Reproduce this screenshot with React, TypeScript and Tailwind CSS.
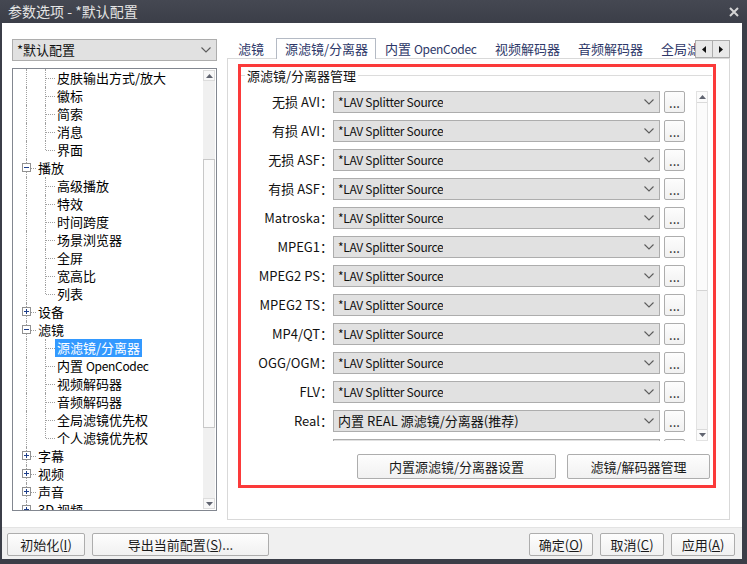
import React from "react";

const FONT = "font-['Noto_Sans_CJK_SC','Noto_Sans',sans-serif]";

// latin runs render a bit narrower in the original UI font
function Lat({ children }: { children: React.ReactNode }) {
  return <span className="text-[12px] tracking-[-0.3px]">{children}</span>;
}

type TreeNode = {
  label: React.ReactNode;
  level: 0 | 1;
  expander?: "plus" | "minus";
  last?: boolean;
  selected?: boolean;
};

const tree: TreeNode[] = [
  { label: "皮肤输出方式/放大", level: 1 },
  { label: "徽标", level: 1 },
  { label: "简索", level: 1 },
  { label: "消息", level: 1 },
  { label: "界面", level: 1, last: true },
  { label: "播放", level: 0, expander: "minus" },
  { label: "高级播放", level: 1 },
  { label: "特效", level: 1 },
  { label: "时间跨度", level: 1 },
  { label: "场景浏览器", level: 1 },
  { label: "全屏", level: 1 },
  { label: "宽高比", level: 1 },
  { label: "列表", level: 1, last: true },
  { label: "设备", level: 0, expander: "plus" },
  { label: "滤镜", level: 0, expander: "minus" },
  { label: "源滤镜/分离器", level: 1, selected: true },
  { label: <>内置 <Lat>OpenCodec</Lat></>, level: 1 },
  { label: "视频解码器", level: 1 },
  { label: "音频解码器", level: 1 },
  { label: "全局滤镜优先权", level: 1 },
  { label: "个人滤镜优先权", level: 1, last: true },
  { label: "字幕", level: 0, expander: "plus" },
  { label: "视频", level: 0, expander: "plus" },
  { label: "声音", level: 0, expander: "plus" },
  { label: "3D 视频", level: 0, expander: "plus" },
];

const LAV = <Lat>*LAV Splitter Source</Lat>;

const splitters: [string, React.ReactNode][] = [
  ["无损 AVI：", LAV],
  ["有损 AVI：", LAV],
  ["无损 ASF：", LAV],
  ["有损 ASF：", LAV],
  ["Matroska：", LAV],
  ["MPEG1：", LAV],
  ["MPEG2 PS：", LAV],
  ["MPEG2 TS：", LAV],
  ["MP4/QT：", LAV],
  ["OGG/OGM：", LAV],
  ["FLV：", LAV],
  ["Real：", "内置 REAL 源滤镜/分离器(推荐)"],
  ["RM：", LAV],
];

function Chevron() {
  return (
    <svg width="10" height="6" viewBox="0 0 10 6">
      <path d="M0.5 0.5 L5 5 L9.5 0.5" fill="none" stroke="#5c5c5c" strokeWidth="1.1" />
    </svg>
  );
}

function Tri({ dir }: { dir: "up" | "down" | "left" | "right" }) {
  const d = {
    up: "M0 4 L3.5 0 L7 4 Z",
    down: "M0 0 L7 0 L3.5 4 Z",
    left: "M4 0 L4 7 L0 3.5 Z",
    right: "M0 0 L4 3.5 L0 7 Z",
  }[dir];
  const vertical = dir === "up" || dir === "down";
  return (
    <svg width={vertical ? 7 : 4} height={vertical ? 4 : 7} viewBox={vertical ? "0 0 7 4" : "0 0 4 7"}>
      <path d={d} fill={vertical ? "#606470" : "#111"} />
    </svg>
  );
}

function Expander({ kind }: { kind: "plus" | "minus" }) {
  return (
    <div className="absolute left-[9px] top-[4px] w-[9px] h-[9px] border border-[#919191] bg-white flex items-center justify-center">
      <svg width="7" height="7" viewBox="0 0 7 7">
        <path d="M1 3.5 H6" stroke="#1f3f8a" strokeWidth="1" />
        {kind === "plus" && <path d="M3.5 1 V6" stroke="#1f3f8a" strokeWidth="1" />}
      </svg>
    </div>
  );
}

function TreeRow({ node }: { node: TreeNode }) {
  return (
    <div className="relative h-[18px] flex items-center text-[13px] text-black whitespace-nowrap">
      <div className="absolute left-[13px] top-0 bottom-0 border-l border-dotted border-[#a0a0a0]" />
      {node.level === 1 ? (
        <>
          <div
            className={`absolute left-[32px] top-0 border-l border-dotted border-[#a0a0a0] ${
              node.last ? "h-[9px]" : "bottom-0"
            }`}
          />
          <div className="absolute left-[33px] top-[9px] w-[9px] border-t border-dotted border-[#a0a0a0]" />
          <span
            className={`ml-[42px] px-[2px] h-[18px] leading-[18px] ${
              node.selected ? "bg-[#3399ff] text-white" : ""
            }`}
          >
            {node.label}
          </span>
        </>
      ) : (
        <>
          <div className="absolute left-[18px] top-[9px] w-[5px] border-t border-dotted border-[#a0a0a0]" />
          {node.expander && <Expander kind={node.expander} />}
          <span className="ml-[25px] leading-[18px]">{node.label}</span>
        </>
      )}
    </div>
  );
}

function Dropdown({ value, className }: { value: React.ReactNode; className: string }) {
  return (
    <div
      className={`flex items-center justify-between bg-[#e1e1e1] border border-[#adadad] text-[13px] text-[#111] pl-[4px] pr-[5px] ${className}`}
    >
      <span className="whitespace-nowrap overflow-hidden">{value}</span>
      <Chevron />
    </div>
  );
}

function Button({ children, className }: { children: React.ReactNode; className: string }) {
  return (
    <div
      className={`flex items-center justify-center rounded-[2px] border border-[#adadad] bg-gradient-to-b from-[#fdfdfd] to-[#f1f1f1] text-[13px] text-[#1a1a1a] whitespace-nowrap ${className}`}
    >
      {children}
    </div>
  );
}

function LeftPane() {
  return (
    <div className="w-[205px] pt-[16px] flex flex-col">
      <Dropdown value="*默认配置" className="h-[22px] pl-[4px] pr-[4px]" />
      <div className="mt-[7px] h-[443px] border border-[#828790] flex bg-white overflow-hidden">
        <div className="flex-1 overflow-hidden">
          {tree.map((n, i) => (
            <TreeRow key={i} node={n} />
          ))}
        </div>
        <div className="w-[12px] mr-[1px] my-[1px] bg-[#f0f0f0] flex flex-col">
          <div className="h-[11px] border border-[#dcdcdc] bg-[#f8f8f8] flex items-center justify-center">
            <Tri dir="up" />
          </div>
          <div className="flex-1">
            <div className="mt-[78px] h-[269px] border border-[#c8c8c8] bg-[#fafafa]" />
          </div>
          <div className="h-[11px] border border-[#dcdcdc] bg-[#f8f8f8] flex items-center justify-center">
            <Tri dir="down" />
          </div>
        </div>
      </div>
    </div>
  );
}

function Tabs() {
  return (
    <div className="flex h-[21px] relative z-10 -mb-[1px]">
      <div className="flex flex-1 overflow-hidden text-[13px] text-[#2d3768] whitespace-nowrap">
        <div className="w-[49px] shrink-0 pl-[11px] flex items-center">滤镜</div>
        <div className="w-[100px] shrink-0 pl-[8px] flex items-center border border-b-0 border-[#b4bac4] bg-white">
          源滤镜/分离器
        </div>
        <div className="w-[110px] shrink-0 pl-[9px] flex items-center">
          内置&nbsp;<Lat>OpenCodec</Lat>
        </div>
        <div className="w-[83px] shrink-0 pl-[9px] flex items-center">视频解码器</div>
        <div className="w-[83px] shrink-0 pl-[9px] flex items-center">音频解码器</div>
        <div className="shrink-0 pl-[9px] flex items-center">全局滤镜优先权</div>
      </div>
      <div className="flex mt-[2px] h-[18px]">
        <div className="w-[18px] border border-[#adadad] bg-[#e9e9e9] flex items-center justify-center">
          <Tri dir="left" />
        </div>
        <div className="w-[18px] -ml-[1px] border border-[#adadad] bg-[#e9e9e9] flex items-center justify-center">
          <Tri dir="right" />
        </div>
      </div>
    </div>
  );
}

function SplitterGroup() {
  return (
    <div className="mt-[5px] ml-[10px] mr-[13px] h-[424px] border-[3px] border-[#fb3a3a] flex flex-col">
      <div className="h-[17px] flex items-center">
        <div className="w-[4px] border-t border-[#dcdcdc]" />
        <span className="ml-[2px] mr-[2px] text-[13px] text-[#111] whitespace-nowrap">源滤镜/分离器管理</span>
        <div className="flex-1 mr-[1px] border-t border-[#dcdcdc]" />
      </div>
      <div className="mt-[7px] h-[350px] flex">
        <div className="w-[444px] overflow-hidden">
          {splitters.map(([label, value], i) => (
            <div key={i} className="flex items-center h-[22px] mb-[7px]">
              <div className="w-[92px] text-right text-[13px] text-[#111] whitespace-nowrap">{label}</div>
              <Dropdown value={value} className="w-[327px] h-[22px]" />
              <Button className="ml-[4px] w-[21px] h-[22px] items-end pb-[3px] text-[11px] leading-none">
                ...
              </Button>
            </div>
          ))}
        </div>
        <div className="ml-[11px] w-[12px] border border-[#e2e2e2] bg-[#f4f4f4] flex flex-col">
          <div className="h-[11px] border-b border-[#dadada] bg-[#fbfbfb] flex items-center justify-center">
            <Tri dir="up" />
          </div>
          <div className="flex-1">
            <div className="h-[188px] border-b border-[#d4d4d4] bg-[#fbfbfb]" />
          </div>
          <div className="h-[11px] border-t border-[#dadada] bg-[#fbfbfb] flex items-center justify-center">
            <Tri dir="down" />
          </div>
        </div>
      </div>
      <div className="mt-[13px] pr-[3px] flex justify-end gap-[11px]">
        <Button className="w-[199px] h-[25px]">内置源滤镜/分离器设置</Button>
        <Button className="w-[143px] h-[25px]">滤镜/解码器管理</Button>
      </div>
    </div>
  );
}

export default function App() {
  return (
    <div className={`w-[747px] h-[564px] bg-[#3b3e48] flex flex-col ${FONT}`}>
      <div className="h-[23px] flex items-center justify-between pl-[8px] pr-[8px] bg-gradient-to-b from-[#454852] to-[#3b3e48]">
        <span className="text-[14px] text-[#e4e4e4] whitespace-nowrap">参数选项 - *默认配置</span>
        <svg width="10" height="10" viewBox="0 0 10 10">
          <path d="M1 1 L9 9 M9 1 L1 9" stroke="#d4d4d4" strokeWidth="2" />
        </svg>
      </div>
      <div className="ml-[2px] mr-[5px] mb-[5px] flex-1 bg-white flex flex-col">
        <div className="h-[504px] flex pl-[10px] gap-[10px]">
          <LeftPane />
          <div className="w-[503px] pt-[15px] flex flex-col">
            <Tabs />
            <div className="h-[462px] border border-[#d9d9d9] bg-white">
              <SplitterGroup />
            </div>
          </div>
        </div>
        <div className="flex-1 bg-[#f0f0f0] border-t border-[#e3e3e3] flex items-start pt-[5px] pl-[5px] pr-[7px]">
          <Button className="w-[78px] h-[23px]">
            初始化(<span className="underline">I</span>)
          </Button>
          <Button className="ml-[7px] w-[177px] h-[23px]">
            导出当前配置(<span className="underline">S</span>)...
          </Button>
          <div className="flex-1" />
          <Button className="w-[64px] h-[23px]">
            确定(<span className="underline">O</span>)
          </Button>
          <Button className="ml-[7px] w-[64px] h-[23px]">
            取消(<span className="underline">C</span>)
          </Button>
          <Button className="ml-[7px] w-[64px] h-[23px]">
            应用(<span className="underline">A</span>)
          </Button>
        </div>
      </div>
    </div>
  );
}
